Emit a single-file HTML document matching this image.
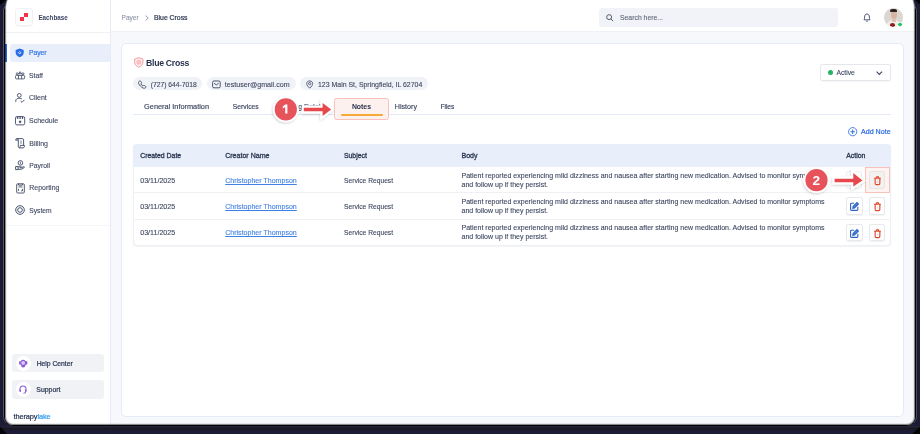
<!DOCTYPE html>
<html><head><meta charset="utf-8">
<style>
*{box-sizing:border-box;margin:0;padding:0}
html,body{width:920px;height:434px;overflow:hidden;background:#1b1b38;font-family:"Liberation Sans",sans-serif}
.abs{position:absolute}
.t{position:absolute;white-space:nowrap;line-height:1;font-size:7px}
svg{position:absolute;overflow:visible}
</style></head><body>
<div class="abs" style="left:0px;top:0px;width:920px;height:434px;background:#1b1b36"></div>
<div class="abs" style="left:0px;top:428px;width:920px;height:2px;background:#19191f"></div>
<div class="abs" style="left:0px;top:426px;width:920px;height:1px;background:#24243a"></div>
<div class="abs" style="left:0px;top:427px;width:920px;height:1px;background:#1c1c30"></div>
<div class="abs" style="left:3px;top:-12px;width:914px;height:438px;border-radius:10px;background:#55555f"></div>
<div class="abs" style="left:916px;top:-12px;width:1px;height:430px;background:#4a4a58"></div>
<div class="abs" style="left:4px;top:-12px;width:912px;height:438px;border-radius:9.5px;background:#000"></div>
<div class="abs" style="left:0;top:0;width:920px;height:434px;clip-path:inset(0px 5px 9px 5px round 0 0 8px 8px);will-change:transform;background:#fff">
<div class="abs" style="left:5px;top:0px;width:106px;height:434px;background:#fff;border-right:1px solid #e6ecf6"></div>
<div class="abs" style="left:5px;top:31.5px;width:105px;height:1px;background:#f0f2f5"></div>
<div class="abs" style="left:15.2px;top:8.2px;width:17.4px;height:17.4px;border:1px solid #eff0f4;border-radius:3.5px;background:#fff;box-shadow:0 0.5px 1px rgba(0,0,0,0.03)"></div>
<div class="abs" style="left:20px;top:17px;width:4.2px;height:4.1px;background:#f4334a"></div>
<div class="abs" style="left:24.2px;top:12.9px;width:3.9px;height:4.1px;background:#f4334a"></div>
<div class="t" style="left:38.4px;top:15.00px;font-size:6.3px;color:#3c4762;font-weight:bold;">Eachbase</div>
<div class="abs" style="left:10.4px;top:43.6px;width:99.6px;height:18.1px;background:#e8effb;border-radius:3px 0 0 3px"></div>
<div class="abs" style="left:5.3px;top:43.6px;width:2.2px;height:18.1px;background:#2a6de6"></div>
<svg style="left:15.3px;top:48px" width="9.4" height="9.6" viewBox="0 0 10 10" ><path d="M5 0.3 L9.3 1.9 V5 C9.3 7.4 7.4 8.9 5 9.8 C2.6 8.9 0.7 7.4 0.7 5 V1.9 Z" fill="#2a6de6"/><path d="M5 3.7 L6.3 5 L5 6.3 L3.7 5Z" fill="none" stroke="#fff" stroke-width="0.8"/></svg>
<div class="t" style="left:28.9px;top:50.00px;font-size:6.75px;color:#2f72e6;-webkit-text-stroke:0.18px currentColor;">Payer</div>
<svg style="left:14.6px;top:71.2px" width="10.2" height="8.4" viewBox="0 0 11 9" ><g fill="none" stroke="#47516b" stroke-width="0.95"><path d="M5.5 0.7 L7.1 2.9 H3.9 Z"/><circle cx="2.4" cy="3" r="1.1"/><circle cx="8.6" cy="3" r="1.1"/><rect x="0.6" y="4.7" width="9.8" height="3.8" rx="1"/><path d="M3.8 4.7 V8.5 M7.2 4.7 V8.5"/></g></svg>
<div class="t" style="left:28.9px;top:73.00px;font-size:6.9px;color:#3d4660;-webkit-text-stroke:0.1px currentColor;">Staff</div>
<svg style="left:15px;top:93px" width="10" height="10" viewBox="0 0 10 10" ><g fill="none" stroke="#47516b" stroke-width="0.95"><circle cx="4.3" cy="2.4" r="1.9"/><path d="M0.8 9 V7.6 C0.8 6.2 2 5.3 4.3 5.3 C5.5 5.3 6.3 5.6 6.8 6"/><path d="M5.6 8 L7 9.3 L9.4 6.9"/></g></svg>
<div class="t" style="left:28.9px;top:94.00px;font-size:7px;color:#3d4660;-webkit-text-stroke:0.1px currentColor;">Client</div>
<svg style="left:15px;top:115.6px" width="10.2" height="9.4" viewBox="0 0 10.2 9.4" ><g fill="none" stroke="#47516b" stroke-width="0.95"><rect x="0.5" y="0.6" width="9.2" height="8.3" rx="1.5"/><path d="M2.7 0.6 V3 M5.1 0.6 V3 M7.5 0.6 V3" stroke-width="1.2"/></g><path d="M5.1 4.3 L6.6 5.85 L5.1 7.4 L3.6 5.85 Z" fill="#47516b"/></svg>
<div class="t" style="left:29px;top:117.00px;font-size:7px;color:#3d4660;-webkit-text-stroke:0.1px currentColor;">Schedule</div>
<svg style="left:15px;top:137.6px" width="10" height="10.6" viewBox="0 0 10 10.6" ><g fill="none" stroke="#47516b" stroke-width="0.95"><path d="M0.6 2.1 C0.6 1.1 1.2 0.6 2 0.6 H7.4 C8.2 0.6 8.6 1.1 8.6 1.9 V7.4"/><path d="M2 0.6 C2.8 0.6 3.3 1.2 3.3 2 V8.6 C3.3 9.4 3.8 9.9 4.6 9.9 H8 C8.8 9.9 9.4 9.3 9.4 8.5 V7.4 H5.2 V8.6 C5.2 9.3 4.8 9.9 4.2 9.9"/><path d="M0.6 2.1 H3.3"/></g><circle cx="6" cy="3.1" r="0.65" fill="#47516b"/><circle cx="6" cy="5" r="0.65" fill="#47516b"/></svg>
<div class="t" style="left:29.3px;top:140.00px;font-size:7px;color:#3d4660;-webkit-text-stroke:0.1px currentColor;">Billing</div>
<svg style="left:15px;top:160px" width="10" height="10.6" viewBox="0 0 10 10.6" ><g fill="none" stroke="#47516b" stroke-width="0.95"><circle cx="5.4" cy="2.9" r="2.3"/><path d="M5.4 1.7 V4.1" stroke-width="0.8"/><path d="M0.6 6.5 H3 V9.6 H0.6 Z"/><path d="M3 6.8 H6.2 C6.8 6.8 7 7.6 6.4 7.8 H4.6 M3 9.3 H6.4 L9.4 7.4 C9.4 6.6 8.8 6.4 8.2 6.8 L6.4 7.8"/></g></svg>
<div class="t" style="left:29.3px;top:163.00px;font-size:6.8px;color:#3d4660;-webkit-text-stroke:0.1px currentColor;">Payroll</div>
<svg style="left:15.5px;top:182.6px" width="9" height="10.8" viewBox="0 0 9 11" ><g fill="none" stroke="#47516b" stroke-width="0.95"><rect x="0.6" y="0.8" width="7.8" height="9.4" rx="1"/><path d="M2.5 0.8 V2.2 H6.5 V0.8 M2.5 4 H6.5 M2.5 6 V8 M5 8 H6.5 V6"/></g></svg>
<div class="t" style="left:29.3px;top:185.00px;font-size:6.95px;color:#3d4660;-webkit-text-stroke:0.1px currentColor;">Reporting</div>
<svg style="left:15px;top:205.2px" width="10" height="10" viewBox="0 0 10 10" ><g fill="none" stroke="#47516b" stroke-width="1"><circle cx="5" cy="5" r="4.3"/><circle cx="5" cy="5" r="2.3"/></g></svg>
<div class="t" style="left:29.3px;top:208.00px;font-size:6.7px;color:#3d4660;-webkit-text-stroke:0.1px currentColor;">System</div>
<div class="abs" style="left:5px;top:224.5px;width:105px;height:1px;background:#f4f5f8"></div>
<div class="abs" style="left:11.8px;top:354.1px;width:92.4px;height:18.4px;background:#f0f2f6;border-radius:3px"></div>
<div class="abs" style="left:15.5px;top:356.2px;width:15px;height:15px;background:#fff;border-radius:50%"></div>
<svg style="left:18.8px;top:358.8px" width="8.4" height="9.4" viewBox="0 0 8.4 9.4" ><g fill="#8a5cd6"><rect x="0.1" y="2.3" width="1.6" height="3.2" rx="0.5"/><rect x="6.7" y="2.3" width="1.6" height="3.2" rx="0.5"/><path d="M2 6.2 C2 9.2 6.4 9.2 6.4 6.2 Z"/></g><circle cx="4.2" cy="3.9" r="2.5" fill="#d9c9f4" stroke="#8a5cd6" stroke-width="1.2"/></svg>
<div class="t" style="left:36.7px;top:361.00px;font-size:6.75px;color:#28334e;-webkit-text-stroke:0.2px currentColor;">Help Center</div>
<div class="abs" style="left:11.8px;top:380.4px;width:92.4px;height:18.3px;background:#f0f2f6;border-radius:3px"></div>
<div class="abs" style="left:15.5px;top:382.3px;width:15px;height:15px;background:#fff;border-radius:50%"></div>
<svg style="left:19px;top:385.2px" width="8" height="9" viewBox="0 0 8 9" ><g fill="none" stroke="#8b5ad8" stroke-width="1.05"><path d="M1 5.5 V4 C1 2.2 2.3 0.9 4 0.9 C5.7 0.9 7 2.2 7 4 V5.5"/><path d="M6.7 6.8 C6.7 7.8 5.8 8.2 4.5 8.2"/></g><rect x="0.4" y="4.4" width="1.6" height="2.6" rx="0.7" fill="#8b5ad8"/><rect x="6" y="4.4" width="1.6" height="2.6" rx="0.7" fill="#8b5ad8"/></svg>
<div class="t" style="left:36.3px;top:387.00px;font-size:6.9px;color:#28334e;-webkit-text-stroke:0.2px currentColor;">Support</div>
<div class="t" style="left:13.5px;top:413.00px;font-size:7.35px;color:#233152;-webkit-text-stroke:0.2px currentColor;letter-spacing:-0.08px;">therapy<span style="color:#2f9cf0">lake</span></div>
<div class="abs" style="left:111px;top:0px;width:809px;height:32px;background:#fff;border-bottom:1px solid #eef1f6"></div>
<div class="t" style="left:121.6px;top:15.00px;font-size:6.5px;color:#8c94a4;-webkit-text-stroke:0.1px currentColor;">Payer</div>
<svg style="left:144.6px;top:14.7px" width="4" height="6" viewBox="0 0 4 6" ><path d="M0.6 0.5 L3.2 3 L0.6 5.5" fill="none" stroke="#7a8396" stroke-width="0.8"/></svg>
<div class="t" style="left:154px;top:15.00px;font-size:6.85px;color:#28334e;-webkit-text-stroke:0.2px currentColor;">Blue Cross</div>
<div class="abs" style="left:599px;top:8px;width:239px;height:18.5px;background:#f1f3f8;border-radius:3px"></div>
<svg style="left:605.5px;top:13.5px" width="7.6" height="7.6" viewBox="0 0 8 8" ><g fill="none" stroke="#4b5468" stroke-width="1"><circle cx="3.3" cy="3.3" r="2.6"/><path d="M5.2 5.2 L7.5 7.5"/></g></svg>
<div class="t" style="left:620px;top:15.00px;font-size:6.85px;color:#5f6878;-webkit-text-stroke:0.1px currentColor;">Search here...</div>
<svg style="left:863px;top:13px" width="8" height="9" viewBox="0 0 8 9" ><g fill="none" stroke="#47516b" stroke-width="0.95"><path d="M1 6.8 C1.6 6 1.6 5.2 1.6 4 C1.6 2.2 2.6 1 4 1 C5.4 1 6.4 2.2 6.4 4 C6.4 5.2 6.4 6 7 6.8 Z"/><path d="M3 7.8 C3.4 8.5 4.6 8.5 5 7.8"/></g></svg>
<div class="abs" style="left:884px;top:7.8px;width:19.2px;height:19.2px;border-radius:50%;background:#dbd6d0;overflow:hidden">
<div class="abs" style="left:2px;top:12.5px;width:15px;height:9px;border-radius:7px 7px 0 0;background:#f0edea"></div>
<div class="abs" style="left:7.2px;top:3px;width:6px;height:8.2px;border-radius:45% 45% 50% 50%;background:#d6b4a1"></div>
<div class="abs" style="left:6.4px;top:1.3px;width:6.6px;height:3.4px;border-radius:4px 4px 1px 2px;background:#2c2320"></div>
<div class="abs" style="left:8px;top:10.5px;width:4px;height:4px;border-radius:1px;background:#dcc0b0"></div>
<div class="abs" style="left:6px;top:15.6px;width:5px;height:3.6px;border-radius:50%;background:#921c1c"></div>
</div>
<div class="abs" style="left:897.4px;top:21.5px;width:5.8px;height:5.8px;border-radius:50%;background:#22c25e;border:0.6px solid #fff"></div>
<div class="abs" style="left:111px;top:32px;width:809px;height:402px;background:#f6f8fb"></div>
<div class="abs" style="left:120.6px;top:43.4px;width:783px;height:373.6px;background:#fff;border:1px solid #e4ebf6;border-radius:5px"></div>
<svg style="left:133.8px;top:56.8px" width="9.6" height="10.8" viewBox="0 0 10 11" ><g fill="none" stroke="#f4969c" stroke-width="0.95"><path d="M5 0.5 L9.3 2 V5.4 C9.3 7.8 7.4 9.6 5 10.5 C2.6 9.6 0.7 7.8 0.7 5.4 V2 Z" fill="#fdeeed"/><circle cx="5" cy="5.4" r="1.9"/></g><circle cx="5" cy="5.4" r="0.7" fill="#f4969c"/></svg>
<div class="t" style="left:146.1px;top:59.00px;font-size:8.7px;color:#28334e;font-weight:bold;letter-spacing:-0.3px;">Blue Cross</div>
<div class="abs" style="left:133px;top:77.3px;width:69.4px;height:13px;border-radius:7px;background:#eff2f6"></div>
<svg style="left:137.8px;top:79.6px" width="8.5" height="8.5" viewBox="0 0 9 9" ><path d="M1.2 1.4 C1.6 0.9 2.4 0.8 2.8 1.3 L3.8 2.7 C4 3.1 3.9 3.5 3.5 3.8 L3.1 4.1 C3.6 5.2 4.3 5.9 5.3 6.4 L5.7 6 C6 5.6 6.4 5.5 6.8 5.8 L8 6.7 C8.5 7.1 8.4 7.9 7.9 8.3 C7.2 8.8 6.2 8.9 5.1 8.3 C3.2 7.3 1.7 5.8 0.8 4 C0.3 3 0.5 2 1.2 1.4 Z" fill="none" stroke="#47516b" stroke-width="1"/></svg>
<div class="t" style="left:150.7px;top:82.00px;font-size:6.75px;color:#3d4660;-webkit-text-stroke:0.1px currentColor;">(727) 644-7018</div>
<div class="abs" style="left:206.5px;top:77.3px;width:89.2px;height:13px;border-radius:7px;background:#eff2f6"></div>
<svg style="left:211.7px;top:79.6px" width="8.8" height="8.8" viewBox="0 0 9 9" ><g fill="none" stroke="#47516b" stroke-width="1"><rect x="0.6" y="1" width="7.8" height="7" rx="1.4"/><path d="M2.2 3.4 L4.5 5 L6.8 3.4"/></g></svg>
<div class="t" style="left:224.8px;top:82.00px;font-size:7.1px;color:#3d4660;-webkit-text-stroke:0.1px currentColor;">testuser@gmail.com</div>
<div class="abs" style="left:300px;top:77.3px;width:128.3px;height:13px;border-radius:7px;background:#eff2f6"></div>
<svg style="left:305.7px;top:79.5px" width="7.4" height="9" viewBox="0 0 8 9" ><g fill="none" stroke="#47516b" stroke-width="1"><path d="M4 8.5 C2 6.7 0.8 5 0.8 3.5 C0.8 1.8 2.2 0.6 4 0.6 C5.8 0.6 7.2 1.8 7.2 3.5 C7.2 5 6 6.7 4 8.5 Z"/><circle cx="4" cy="3.5" r="1.2"/></g></svg>
<div class="t" style="left:318px;top:82.00px;font-size:6.95px;color:#3d4660;-webkit-text-stroke:0.1px currentColor;">123 Main St, Springfield, IL 62704</div>
<div class="abs" style="left:820.3px;top:64.2px;width:71.1px;height:16.8px;background:#fff;border:1px solid #e3e6ea;border-radius:2.5px;box-shadow:0 0.5px 1px rgba(0,0,0,0.04)"></div>
<div class="abs" style="left:827.6px;top:70.1px;width:5.1px;height:5.1px;border-radius:50%;background:#1fb363"></div>
<div class="t" style="left:836.4px;top:70.00px;font-size:6.8px;color:#3d4660;-webkit-text-stroke:0.1px currentColor;">Active</div>
<svg style="left:876px;top:70.6px" width="6.6" height="4.2" viewBox="0 0 7 4.5" ><path d="M0.6 0.6 L3.5 3.6 L6.4 0.6" fill="none" stroke="#3d4660" stroke-width="1.2"/></svg>
<div class="abs" style="left:132.8px;top:114.4px;width:758.6px;height:1px;background:#e3eaf7"></div>
<div class="t" style="left:144.1px;top:103.00px;font-size:7.35px;color:#3d4660;-webkit-text-stroke:0.15px currentColor;">General Information</div>
<div class="t" style="left:232.8px;top:104.00px;font-size:6.75px;color:#3d4660;-webkit-text-stroke:0.15px currentColor;">Services</div>
<div class="t" style="left:283.5px;top:103.00px;font-size:7px;color:#3d4660;-webkit-text-stroke:0.15px currentColor;">Billing Details</div>
<div class="t" style="left:394.8px;top:104.00px;font-size:7.15px;color:#3d4660;-webkit-text-stroke:0.15px currentColor;">History</div>
<div class="t" style="left:440.4px;top:104.00px;font-size:6.6px;color:#3d4660;-webkit-text-stroke:0.15px currentColor;">Files</div>
<svg style="left:848px;top:127.3px" width="9.4" height="9.4" viewBox="0 0 10 10" ><g fill="none" stroke="#3574e6" stroke-width="0.95"><circle cx="5" cy="5" r="4.4"/><path d="M5 2.6 V7.4 M2.6 5 H7.4" stroke-width="1.1"/></g></svg>
<div class="t" style="left:861px;top:129.00px;font-size:7.1px;color:#2d6ce4;-webkit-text-stroke:0.22px currentColor;">Add Note</div>
<div class="abs" style="left:132.6px;top:144.2px;width:758.7px;height:101.6px;border:1px solid #eceff4;border-radius:4px;background:#fff;box-shadow:0 1px 1.5px rgba(20,30,60,0.05)"></div>
<div class="abs" style="left:132.6px;top:144.2px;width:758.7px;height:22.4px;background:#e9effa;border-radius:4px 4px 0 0"></div>
<div class="abs" style="left:133px;top:192.2px;width:758px;height:1px;background:#eff1f5"></div>
<div class="abs" style="left:133px;top:218.6px;width:758px;height:1px;background:#eff1f5"></div>
<div class="t" style="left:140.2px;top:153.00px;font-size:6.9px;color:#2b3651;-webkit-text-stroke:0.3px currentColor;">Created Date</div>
<div class="t" style="left:225.2px;top:152.00px;font-size:7.05px;color:#2b3651;-webkit-text-stroke:0.3px currentColor;">Creator Name</div>
<div class="t" style="left:344px;top:153.00px;font-size:6.85px;color:#2b3651;-webkit-text-stroke:0.3px currentColor;">Subject</div>
<div class="t" style="left:461.5px;top:152.00px;font-size:7.05px;color:#2b3651;-webkit-text-stroke:0.3px currentColor;">Body</div>
<div class="t" style="left:846.2px;top:153.00px;font-size:6.95px;color:#2b3651;-webkit-text-stroke:0.3px currentColor;">Action</div>
<div class="t" style="left:140.2px;top:178.00px;font-size:7.1px;color:#3d4660;-webkit-text-stroke:0.1px currentColor;">03/11/2025</div>
<div class="t" style="left:225.2px;top:177.00px;font-size:7.05px;color:#3f80e4;-webkit-text-stroke:0.1px currentColor;text-decoration:underline;text-decoration-thickness:0.5px;text-underline-offset:0.9px;">Christopher Thompson</div>
<div class="t" style="left:344px;top:178.00px;font-size:6.7px;color:#3d4660;-webkit-text-stroke:0.1px currentColor;">Service Request</div>
<div class="t" style="left:461.5px;top:172.00px;font-size:7.03px;color:#3d4660;-webkit-text-stroke:0.1px currentColor;">Patient reported experiencing mild dizziness and nausea after starting new medication. Advised to monitor symptoms</div>
<div class="t" style="left:461.5px;top:181.00px;font-size:7.03px;color:#3d4660;-webkit-text-stroke:0.1px currentColor;">and follow up if they persist.</div>
<div class="t" style="left:140.2px;top:204.00px;font-size:7.1px;color:#3d4660;-webkit-text-stroke:0.1px currentColor;">03/11/2025</div>
<div class="t" style="left:225.2px;top:203.00px;font-size:7.05px;color:#3f80e4;-webkit-text-stroke:0.1px currentColor;text-decoration:underline;text-decoration-thickness:0.5px;text-underline-offset:0.9px;">Christopher Thompson</div>
<div class="t" style="left:344px;top:204.00px;font-size:6.7px;color:#3d4660;-webkit-text-stroke:0.1px currentColor;">Service Request</div>
<div class="t" style="left:461.5px;top:198.00px;font-size:7.03px;color:#3d4660;-webkit-text-stroke:0.1px currentColor;">Patient reported experiencing mild dizziness and nausea after starting new medication. Advised to monitor symptoms</div>
<div class="t" style="left:461.5px;top:207.00px;font-size:7.03px;color:#3d4660;-webkit-text-stroke:0.1px currentColor;">and follow up if they persist.</div>
<div class="t" style="left:140.2px;top:230.00px;font-size:7.1px;color:#3d4660;-webkit-text-stroke:0.1px currentColor;">03/11/2025</div>
<div class="t" style="left:225.2px;top:229.00px;font-size:7.05px;color:#3f80e4;-webkit-text-stroke:0.1px currentColor;text-decoration:underline;text-decoration-thickness:0.5px;text-underline-offset:0.9px;">Christopher Thompson</div>
<div class="t" style="left:344px;top:230.00px;font-size:6.7px;color:#3d4660;-webkit-text-stroke:0.1px currentColor;">Service Request</div>
<div class="t" style="left:461.5px;top:224.00px;font-size:7.03px;color:#3d4660;-webkit-text-stroke:0.1px currentColor;">Patient reported experiencing mild dizziness and nausea after starting new medication. Advised to monitor symptoms</div>
<div class="t" style="left:461.5px;top:233.00px;font-size:7.03px;color:#3d4660;-webkit-text-stroke:0.1px currentColor;">and follow up if they persist.</div>
<div class="abs" style="left:865px;top:167.1px;width:25px;height:25.7px;border:1px solid #f8c2bb;background:#fdf3f1"></div>
<div class="abs" style="left:845.7px;top:171px;width:16.8px;height:17.6px;border:1px solid #eceef1;border-radius:2.5px;background:#fff"></div>
<div class="abs" style="left:869px;top:170.9px;width:16.3px;height:17.9px;border:1px solid #e6e4e4;border-radius:2.5px;background:#f3f1f1"></div>
<svg style="left:874.3px;top:175.5px" width="7" height="9" viewBox="0 0 7 9" ><g fill="none" stroke="#e0492c" stroke-width="1.15"><path d="M0.1 2.2 H6.9 M2.2 2.1 C2.2 0.9 2.7 0.6 3.5 0.6 C4.3 0.6 4.8 0.9 4.8 2.1 M1.1 2.4 L1.2 7.4 C1.2 8.1 1.6 8.6 2.3 8.6 H4.7 C5.4 8.6 5.8 8.1 5.8 7.4 L5.9 2.4"/><path d="M3.5 4.4 V6.4" stroke-width="0.5" opacity="0.35"/></g></svg>
<div class="abs" style="left:846.2px;top:197.2px;width:16.6px;height:17.4px;border:1px solid #e6e8ec;border-radius:2.5px;background:#fff;box-shadow:0 0.5px 1px rgba(0,0,0,0.05)"></div>
<div class="abs" style="left:868.8px;top:197.2px;width:16.5px;height:17.4px;border:1px solid #e6e8ec;border-radius:2.5px;background:#fff;box-shadow:0 0.5px 1px rgba(0,0,0,0.05)"></div>
<svg style="left:850px;top:202.0px" width="9" height="9" viewBox="0 0 9 9" ><g fill="none" stroke="#2c62c8" stroke-width="1.1"><path d="M4.2 1.2 H1.4 C0.9 1.2 0.6 1.5 0.6 2 V7.6 C0.6 8.1 0.9 8.4 1.4 8.4 H7 C7.5 8.4 7.8 8.1 7.8 7.6 V4.8"/><path d="M7 0.6 L8.4 2 L4.5 5.9 L2.8 6.3 L3.1 4.5 Z" fill="#5a88dc"/></g></svg>
<svg style="left:874.3px;top:201.79999999999998px" width="7" height="9" viewBox="0 0 7 9" ><g fill="none" stroke="#e0492c" stroke-width="1.15"><path d="M0.1 2.2 H6.9 M2.2 2.1 C2.2 0.9 2.7 0.6 3.5 0.6 C4.3 0.6 4.8 0.9 4.8 2.1 M1.1 2.4 L1.2 7.4 C1.2 8.1 1.6 8.6 2.3 8.6 H4.7 C5.4 8.6 5.8 8.1 5.8 7.4 L5.9 2.4"/><path d="M3.5 4.4 V6.4" stroke-width="0.5" opacity="0.35"/></g></svg>
<div class="abs" style="left:846.2px;top:223.9px;width:16.6px;height:17.4px;border:1px solid #e6e8ec;border-radius:2.5px;background:#fff;box-shadow:0 0.5px 1px rgba(0,0,0,0.05)"></div>
<div class="abs" style="left:868.8px;top:223.9px;width:16.5px;height:17.4px;border:1px solid #e6e8ec;border-radius:2.5px;background:#fff;box-shadow:0 0.5px 1px rgba(0,0,0,0.05)"></div>
<svg style="left:850px;top:228.70000000000002px" width="9" height="9" viewBox="0 0 9 9" ><g fill="none" stroke="#2c62c8" stroke-width="1.1"><path d="M4.2 1.2 H1.4 C0.9 1.2 0.6 1.5 0.6 2 V7.6 C0.6 8.1 0.9 8.4 1.4 8.4 H7 C7.5 8.4 7.8 8.1 7.8 7.6 V4.8"/><path d="M7 0.6 L8.4 2 L4.5 5.9 L2.8 6.3 L3.1 4.5 Z" fill="#5a88dc"/></g></svg>
<svg style="left:874.3px;top:228.5px" width="7" height="9" viewBox="0 0 7 9" ><g fill="none" stroke="#e0492c" stroke-width="1.15"><path d="M0.1 2.2 H6.9 M2.2 2.1 C2.2 0.9 2.7 0.6 3.5 0.6 C4.3 0.6 4.8 0.9 4.8 2.1 M1.1 2.4 L1.2 7.4 C1.2 8.1 1.6 8.6 2.3 8.6 H4.7 C5.4 8.6 5.8 8.1 5.8 7.4 L5.9 2.4"/><path d="M3.5 4.4 V6.4" stroke-width="0.5" opacity="0.35"/></g></svg>
<div class="abs" style="left:334.3px;top:98.2px;width:55.1px;height:22.3px;border:1px solid #f8c2bb;border-radius:2.5px;background:#fdf1ef"></div>
<div class="t" style="left:351.9px;top:104.00px;font-size:6.9px;color:#27324d;font-weight:bold;">Notes</div>
<div class="abs" style="left:340.5px;top:114.1px;width:42.4px;height:1.8px;border-radius:1px;background:#f6a935"></div>
<svg style="left:0;top:0" width="920" height="434" viewBox="0 0 920 434">
<defs><filter id="sh" x="-50%" y="-50%" width="200%" height="200%"><feDropShadow dx="-0.6" dy="1.2" stdDeviation="1" flood-color="#000" flood-opacity="0.18"/></filter></defs>
<path d="M303.8 107.7 H322.6 V103 L331.2 109.5 L322.6 116 V111.3 H303.8 Z" fill="#e5484d" stroke="#fff" stroke-width="4.2" stroke-linejoin="miter" paint-order="stroke" filter="url(#sh)"/>
<circle cx="285.8" cy="109.4" r="12" fill="#e7525a" stroke="#fff" stroke-width="1.8" filter="url(#sh)"/>
<path d="M285.2 104.5 H287.4 V113.6 H285.2 V107.1 L282.8 108.6 V106.5 Z" fill="#fff"/>
<path d="M834.6 178.7 H853.3 V173 L862.5 180.5 L853.3 186.6 V182.3 H834.6 Z" fill="#e5484d" stroke="#fff" stroke-width="4.2" paint-order="stroke" filter="url(#sh)"/>
<circle cx="816.5" cy="180.15" r="12" fill="#e7525a" stroke="#fff" stroke-width="1.8" filter="url(#sh)"/>
<text x="816.4" y="184.5" text-anchor="middle" style="font-family:'Liberation Sans',sans-serif" font-weight="bold" font-size="13.7" fill="#fff">2</text>
</svg>
<div class="abs" style="left:5px;top:-20px;width:910px;height:445px;border-radius:8px;box-shadow:inset 0 0 0 1px rgba(0,0,0,0.4), inset 0 0 0 2px rgba(0,0,0,0.07)"></div>
</div>
<svg style="left:0px;top:0px" width="12" height="12" viewBox="0 0 12 12" ><path d="M0 0 H7.2 L4.6 8.5 H0 Z" fill="#1b1b36"/><path d="M0 0 H6 L0 5 Z" fill="#000"/><path d="M7.2 0 L4.6 8.5" stroke="#8a8a95" stroke-width="0.8"/><circle cx="5.6" cy="5.4" r="0.6" fill="#55556a"/></svg>
<svg style="left:908px;top:0px" width="12" height="12" viewBox="908 0 12 12" ><path d="M920 0 H913 L915.3 8.5 H920 Z" fill="#1b1b36"/><path d="M920 0 H915 L920 4.5 Z" fill="#000"/><path d="M913 0 L915.3 8.5" stroke="#9a9aa5" stroke-width="0.9"/><circle cx="914.6" cy="5.3" r="0.6" fill="#55556a"/></svg>
<svg style="left:0px;top:420px" width="920" height="14" viewBox="0 420 920 14" ><path d="M0 426.5 L0 434 L7 434 Z" fill="#050508"/><path d="M920 426.5 L920 434 L912 434 Z" fill="#050508"/></svg>
</body></html>
